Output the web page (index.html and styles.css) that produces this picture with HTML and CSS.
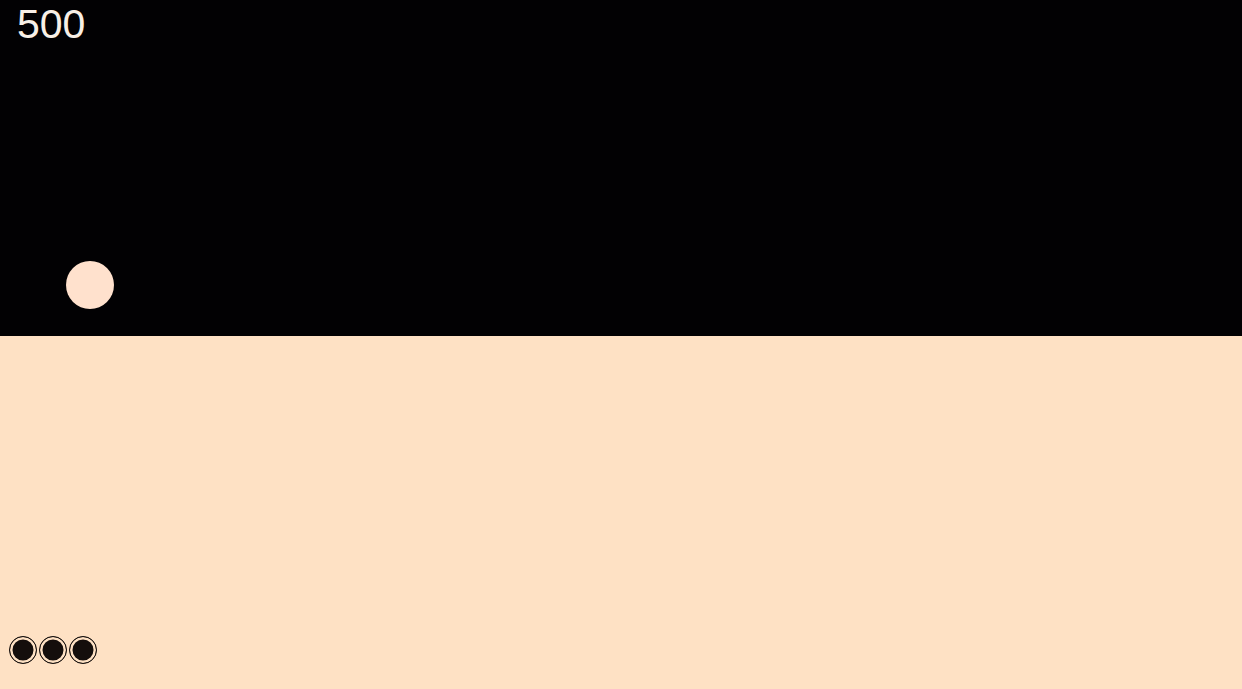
FILE: index.html
```html
<!DOCTYPE html>
<html>
<head>
<meta charset="utf-8">
<link rel="stylesheet" href="styles.css">
</head>
<body>
<div class="game">
  <div class="sky">
    <div class="score">500</div>
    <div class="ball"></div>
  </div>
  <div class="ground">
    <div class="lives">
      <span class="life"></span>
      <span class="life"></span>
      <span class="life"></span>
    </div>
  </div>
</div>
</body>
</html>
```
FILE: styles.css
```css
html, body {
  margin: 0;
  padding: 0;
  height: 100%;
  overflow: hidden;
}
body {
  font-family: "Liberation Sans", Arial, sans-serif;
  background: #fee1c4;
}
.game {
  display: flex;
  flex-direction: column;
  width: 1242px;
  height: 689px;
}
.sky {
  position: relative;
  height: 336px;
  background: #020103;
  flex: none;
}
.score {
  color: #f8efe6;
  font-size: 41px;
  line-height: 46px;
  padding: 1px 0 0 17px;
}
.ball {
  position: absolute;
  left: 66px;
  top: 261px;
  width: 48px;
  height: 48px;
  border-radius: 50%;
  background: #ffe1cd;
}
.ground {
  flex: 1;
  background: #fee1c4;
  display: flex;
  flex-direction: column;
  justify-content: flex-end;
  padding: 0 0 25px 9px;
}
.lives {
  display: flex;
  gap: 2px;
}
.life {
  box-sizing: border-box;
  width: 28px;
  height: 28px;
  border-radius: 50%;
  border: 1.5px solid #140e0c;
  background: #140e0c;
  box-shadow: inset 0 0 0 2.5px #fee1c4;
}
```
